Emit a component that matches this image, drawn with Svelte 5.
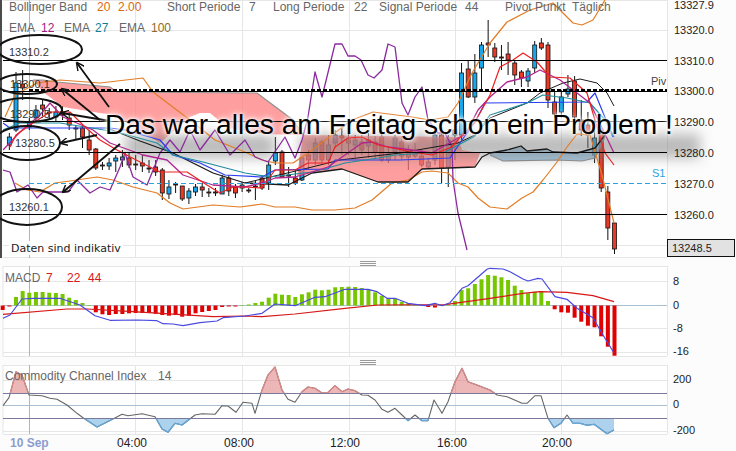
<script>
  // x of candle k; 15 minute bars
  const bx = (k) => 16 + 6.65 * k;
  const pts = (a) => a.map((p) => p.join(',')).join(' ');
  const area = (a, y) => `${a[0][0]},${y} ${pts(a)} ${a[a.length - 1][0]},${y}`;

  const vgrid = [135, 242, 349, 455, 561];

  // k, high, body top, body bottom, low, colour
  const candles = [
    [-1,133,137,145,150,'u'],[0,72,83,130,132,'u'],[1,70,84,88,100,'d'],[2,118,122,127,130,'u'],[3,105,110,118,122,'u'],
    [4,100,105,109,116,'d'],[5,108,112,113,118,'d'],[6,106,112,117,122,'u'],[7,106,112,115,120,'d'],[8,112,118,125,130,'d'],
    [9,125,128,129,140,'d'],[10,125,128,137,148,'d'],[11,130,140,150,155,'d'],[12,148,149,168,170,'d'],[13,162,165,166,170,'d'],
    [14,158,163,166,170,'u'],[15,155,158,161,172,'u'],[16,150,157,160,167,'u'],[17,152,158,165,168,'d'],[18,155,164,165,170,'d'],
    [19,155,163,166,172,'d'],[20,160,168,169,173,'d'],[21,160,167,172,176,'d'],[22,168,170,193,200,'d'],[23,180,187,194,199,'u'],
    [24,182,184,185,193,'d'],[25,186,186,199,201,'d'],[26,188,191,198,204,'u'],[27,184,187,192,196,'u'],[28,183,187,190,197,'d'],
    [29,188,192,193,197,'d'],[30,188,192,193,196,'d'],[31,175,178,194,194,'u'],[32,175,178,191,196,'d'],[33,184,187,193,198,'d'],
    [34,182,185,188,192,'u'],[35,188,190,191,193,'d'],[36,181,186,187,200,'d'],[37,175,178,188,190,'d'],[38,162,165,183,190,'u'],
    [39,137,153,161,165,'u'],[40,150,152,177,178,'d'],[41,167,175,176,187,'d'],[42,170,178,183,185,'d'],[43,157,158,180,181,'u'],
    [44,150,155,160,170,'d'],[45,138,143,160,165,'u'],[46,140,142,160,163,'d'],[47,135,145,160,165,'u'],[48,130,135,143,148,'u'],
    [49,128,136,138,155,'d'],[50,133,140,143,155,'d'],[51,135,140,145,158,'u'],[52,135,142,150,155,'d'],[53,133,140,146,158,'u'],
    [54,136,142,152,158,'d'],[55,130,137,160,162,'d'],[56,148,154,160,163,'u'],[57,135,138,152,160,'u'],[58,136,142,156,160,'d'],
    [59,145,150,157,170,'d'],[60,143,153,156,158,'d'],[61,150,156,165,167,'d'],[62,158,162,167,168,'u'],[63,130,135,160,165,'u'],
    [64,130,135,168,183,'d'],[65,135,140,167,187,'u'],[66,125,130,135,160,'u'],[67,63,73,135,140,'u'],[68,60,69,97,98,'d'],
    [69,54,73,97,103,'u'],[70,42,45,68,90,'u'],[71,20,43,45,57,'d'],[72,43,48,57,62,'d'],[73,45,57,58,70,'d'],
    [74,42,54,60,75,'d'],[75,60,63,75,85,'d'],[76,70,72,78,87,'d'],[77,68,71,81,87,'u'],[78,41,45,68,73,'u'],
    [79,38,43,48,50,'d'],[80,42,45,100,108,'d'],[81,91,102,114,118,'d'],[82,90,97,112,118,'u'],[83,75,89,94,97,'u'],
    [84,76,81,117,120,'d'],[85,100,120,130,136,'d'],[86,112,125,135,148,'d'],[87,118,138,155,163,'u'],[88,125,130,188,192,'d'],
    [89,186,192,228,240,'d'],[90,223,223,249,254,'d']
  ];

  const cloudRed = [[33,80],[43,80],[57,82],[110,87],[117,92],[257,93],[293,120],[303,135],[265,134],[228,128],[210,113],[200,113],[190,117],[160,143],[133,127],[115,115],[100,113],[63,107],[43,92]];
  const cloudTop = [[33,80],[43,80],[57,82],[110,87],[117,92],[257,93],[293,120],[303,135]];
  const cloudRed2 = [[297,176],[303,135],[458,137],[462,150],[480,153],[475,167],[422,169],[408,182],[378,182],[342,169],[312,173]];
  const blueTop = [[490,153],[507,150],[521,146],[527,151],[547,149],[553,152],[577,153],[595,148],[605,135]];
  const blueBot = [[605,137],[595,158],[582,161],[557,160],[503,161],[490,155]];

  const bollUp = [[5,117],[15,95],[37,83],[60,80],[100,83],[143,78],[153,92],[190,120],[215,140],[245,152],[262,160],[275,163],[293,163],[308,153],[332,135],[352,120],[373,112],[412,117],[430,120],[448,117],[458,103],[472,73],[490,43],[507,22],[530,10],[553,3],[573,23],[582,25],[593,20],[605,0]];
  const bollLow = [[15,183],[27,190],[40,192],[55,183],[70,181],[97,177],[113,180],[133,187],[157,193],[170,203],[183,209],[213,205],[240,207],[262,204],[275,207],[295,207],[312,210],[335,210],[355,208],[372,200],[392,183],[408,180],[422,172],[432,171],[448,173],[458,183],[468,187],[478,198],[490,207],[507,209],[522,198],[533,192],[543,180],[557,162],[567,147],[577,134],[590,135],[602,175],[614,223]];
  const chikou = [[3,170],[10,172],[17,192],[28,185],[37,198],[43,192],[63,192],[68,192],[77,180],[90,193],[100,187],[110,190],[120,167],[125,153],[133,177],[147,185],[160,153],[170,140],[180,152],[190,130],[200,150],[215,130],[230,155],[245,140],[255,157],[268,162],[285,137],[295,158],[302,140],[308,117],[315,72],[322,97],[335,44],[342,44],[348,56],[355,56],[361,60],[368,75],[374,78],[382,70],[388,44],[395,47],[402,103],[408,115],[415,97],[422,87],[428,120],[438,133],[445,133],[452,147],[453,180],[458,213],[467,250]];
  const redLine = [[10,147],[16,135],[30,125],[50,112],[70,112],[85,127],[100,140],[117,150],[140,162],[160,172],[187,172],[207,185],[220,193],[233,187],[245,187],[262,188],[275,170],[295,170],[308,163],[328,163],[335,147],[348,138],[362,137],[378,145],[412,152],[432,155],[452,147],[462,135],[475,122],[490,95],[500,67],[513,60],[523,53],[537,62],[550,77],[570,78],[587,93],[597,127],[605,153],[614,165]];
  const blueLine = [[3,123],[10,128],[110,128],[125,130],[160,140],[173,155],[200,163],[225,175],[262,177],[275,170],[328,169],[335,160],[400,160],[450,158],[462,140],[475,122],[485,103],[587,102],[595,93],[613,137]];
  const teal = [[3,130],[20,123],[60,123],[117,132],[157,143],[173,155],[203,162],[245,173],[270,177],[312,172],[328,168],[345,163],[378,158],[395,155],[445,152],[462,143],[475,136],[490,115],[527,103],[543,95],[567,98],[590,103],[605,120],[614,137]];
  const magenta = [[3,150],[20,132],[40,115],[50,103],[63,117],[93,130],[110,143],[143,155],[167,160],[183,175],[213,185],[245,187],[265,182],[275,178],[295,177],[312,172],[328,167],[335,162],[362,143],[372,142],[388,147],[412,150],[432,153],[458,138],[465,135],[478,110],[490,97],[507,82],[527,77],[540,70],[560,80],[577,93],[590,103],[603,130],[614,153]];
  const blackA = [[107,128],[140,141],[173,153],[213,173],[245,183],[288,185],[312,173],[342,169],[378,182],[408,182],[422,169],[475,167],[482,157],[490,153]];
  const blackB = [[245,183],[300,170],[340,160],[400,153],[458,143],[475,135],[490,118],[527,103],[540,93],[563,83],[580,79],[597,83],[607,93],[614,106]];

  const ellipses = [[40,49.5,42,14.5],[27,84,30,10],[27,110,35,12],[27,143,33,17],[27,207,35,18]];
  const arrows = [[109,107,77,63],[100,120,62,89],[110,121,62,113],[97,135,61,143],[120,144,63,192]];
  const notes = [['13310.2',9,56],['13300.1',10,88],['13290.5',10,118],['13280.5',15,147],['13260.1',9,211]];

  // histogram tops from k = -2
  const macd = [310,306.5,297,291,292.7,292,292,292.7,293,294,297.7,300,303,305,312.3,314.3,315,314,314,313.3,313,313,313,313.7,315,315.7,315,316.7,315.7,313.3,312,311,310,307,306.5,306.5,305,304.5,303,301.7,297.7,293.7,294.7,295,297,294.3,292.3,289.7,290.3,289.7,287.3,287,286.7,287,288,289.3,292.3,295.7,298.3,298.7,301.7,303,304.3,305,307,307.5,305,304.5,301,290,288.3,284,279.3,275,275.7,277.3,280,285.7,290,293.3,291.7,291.7,301,309.3,312.3,312.7,317.7,321.7,325.7,327.3,336.3,346.7,355.7];
  const macdBlue = [[3,318.3],[10,315],[22,299],[33,298.3],[60,298.3],[80,305],[95,315.7],[110,320.3],[137,320],[157,320.7],[163,323.7],[173,324],[183,325.7],[200,322.7],[217,321],[223,317.7],[245,316],[262,313.3],[275,304],[295,305.7],[315,297.3],[325,296.7],[345,289.3],[368,289.3],[377,291.7],[387,298.3],[395,298.3],[408,303.3],[425,305.7],[435,303.3],[442,305.7],[450,302.7],[462,288.3],[468,285.7],[487,269.3],[490,268.3],[503,269],[510,271.7],[523,279],[528,281],[538,278.3],[542,279],[555,296.7],[567,299.3],[577,308.3],[593,317.7],[603,335],[614,353]];
  const macdRed = [[3,314.3],[67,309],[87,309],[133,311.7],[213,316.7],[245,316],[262,316.7],[295,314],[345,308.3],[378,305],[445,304.7],[490,298.3],[523,293.3],[540,291.7],[567,292.3],[593,295.7],[614,301.7]];

  const cci = [[3,405.7],[9,397.7],[16,371.7],[22,375],[29,395],[42,395.7],[50,398.3],[57,399.3],[67,405],[77,413.3],[83,417.7],[97,427],[113,419],[122,414.3],[128,415.7],[142,413.7],[155,416.7],[162,429],[168,432.3],[175,423.3],[182,425],[195,415],[202,413.7],[215,414.3],[222,405.7],[228,406],[236,412.3],[243,402.3],[252,403.3],[255,413.3],[262,390],[268,375],[275,367],[282,390],[288,399.3],[295,402.3],[302,391.7],[308,387],[315,388.3],[322,393],[328,392.3],[335,385.7],[342,391.7],[348,389],[355,390.7],[362,395],[368,395.3],[375,400],[382,409.3],[388,412.3],[395,408.3],[402,415],[408,420.7],[415,415],[422,420.7],[428,420.7],[434,400],[442,413.3],[448,401.7],[455,381.7],[462,368.3],[468,381.7],[475,384.3],[490,390],[497,395],[507,396.7],[522,403.3],[527,403.3],[535,395.7],[541,395.7],[548,418.3],[554,427.7],[561,423.3],[567,415],[573,423.3],[580,423.3],[587,425.3],[594,424.3],[607,433.7],[614,430]];

  const times = [['04:00',132],['08:00',239],['12:00',345],['16:00',452],['20:00',557]];
</script>

<div class="chart">
  <svg class="main" viewBox="0 0 736 258" width="736" height="258">
    <defs>
      <clipPath id="plot"><rect x="3" y="0" width="664" height="258" /></clipPath>
      <filter id="soft" x="-10%" y="-100%" width="120%" height="300%">
        <feGaussianBlur stdDeviation="6.5" />
      </filter>
    </defs>
    <rect x="3" y="0" width="664" height="257" fill="#fff" />
    <g class="grid">
      {#each [30.5, 245.5, 257.5] as y}<line x1="3" x2="667" y1={y} y2={y} />{/each}
      <line x1="3" x2="667" y1="0.5" y2="0.5" />
      {#each vgrid as x}<line x1={x + 0.5} x2={x + 0.5} y1="0" y2="257" />{/each}
      <line x1="667.5" x2="667.5" y1="0" y2="257" />
    </g>
    <line class="cross" x1="29.5" x2="29.5" y1="0" y2="258" />

    <g clip-path="url(#plot)">
      {#each candles as [k, hi, top, bot, lo, c]}
        <line class="wick" x1={bx(k)} x2={bx(k)} y1={hi} y2={lo} />
        <rect class={c === 'u' ? 'up' : 'down'} x={bx(k) - 2} y={top} width="4" height={bot - top} />
      {/each}

      <polygon class="cloud" points={pts(cloudRed)} />
      <polygon class="cloud" points={pts(cloudRed2)} />
      <polygon class="cloud-blue" points={pts([...blueTop, ...blueBot])} />
      <polyline class="edge" points={pts(cloudTop)} />
      <polyline class="edge" points={pts(blueBot)} />
    </g>

    <!-- the shadow of the headline sits under the indicator lines -->
    <g class="shade" filter="url(#soft)">
      <rect x="125" y="134" width="150" height="24" />
      <rect x="300" y="134" width="400" height="24" />
    </g>

    <g clip-path="url(#plot)">
      <polyline class="l orange" points={pts(bollUp)} />
      <polyline class="l orange" points={pts(bollLow)} />
      <polyline class="l purple" points={pts(chikou)} />
      <polyline class="l black" points={pts(blackA)} />
      <polyline class="l black thin" points={pts(blackB)} />
      <polyline class="l black" points={pts(blueTop)} />
      <polyline class="l blue" points={pts(blueLine)} />
      <polyline class="l teal" points={pts(teal)} />
      <polyline class="l magenta" points={pts(magenta)} />
      <polyline class="l red" points={pts(redLine)} />
    </g>

    <g class="level">
      {#each [60.5, 91.5, 121.5, 152.5, 214.5] as y}<line x1="3" x2="667" y1={y} y2={y} />{/each}
      <line class="piv" x1="29" x2="667" y1="90" y2="90" />
    </g>
    <line class="s1" x1="29" x2="667" y1="183.5" y2="183.5" />
    <line class="edge-left" x1="1" x2="1" y1="0" y2="258" />

    <text class="lbl" x="651" y="85" fill="#444">Piv</text>
    <text class="lbl" x="652" y="177" fill="#29a3dc">S1</text>

    <g class="legend">
      <text x="9" y="11">Bollinger Band</text>
      <text class="orange-t" x="97" y="11">20</text>
      <text class="orange-t" x="118" y="11">2.00</text>
      <text x="167" y="11">Short Periode</text>
      <text x="249" y="11">7</text>
      <text x="273" y="11">Long Periode</text>
      <text x="354" y="11">22</text>
      <text x="379" y="11">Signal Periode</text>
      <text x="465" y="11">44</text>
      <text x="505" y="11">Pivot Punkt</text>
      <text x="572" y="11">Täglich</text>
      <text x="9" y="32">EMA</text>
      <text class="magenta-t" x="41" y="32">12</text>
      <text x="64" y="32">EMA</text>
      <text class="teal-t" x="95" y="32">27</text>
      <text x="119" y="32">EMA</text>
      <text class="brown-t" x="151" y="32">100</text>
    </g>

    <g class="axis">
      <text x="674" y="9">13327.9</text>
      <text x="674" y="34">13320.0</text>
      <text x="674" y="65">13310.0</text>
      <text x="674" y="95">13300.0</text>
      <text x="674" y="126">13290.0</text>
      <text x="674" y="157">13280.0</text>
      <text x="674" y="188">13270.0</text>
      <text x="674" y="219">13260.0</text>
    </g>
    <rect class="price" x="667.5" y="239.5" width="67" height="17" />
    <text class="axis" x="672" y="252">13248.5</text>

    <rect class="note-bg" x="9" y="241" width="114" height="14" />
    <text class="note" x="11" y="252">Daten sind indikativ</text>
  </svg>

  <div class="grip"><i></i><i></i><i></i></div>

  <svg viewBox="0 266 736 91" width="736" height="91">
    <rect x="3" y="266" width="664" height="91" fill="#fff" />
    <g class="grid">
      {#each [266.5, 281.5, 328.5, 352.5, 356.5] as y}<line x1="3" x2="667" y1={y} y2={y} />{/each}
      {#each vgrid as x}<line x1={x + 0.5} x2={x + 0.5} y1="266" y2="356" />{/each}
      <line x1="3" x2="3" y1="266" y2="356" />
      <line x1="667.5" x2="667.5" y1="266" y2="356" />
    </g>
    <line class="zero" x1="3" x2="667" y1="305.5" y2="305.5" />
    <line class="cross" x1="29.5" x2="29.5" y1="266" y2="356" />
    {#each macd as top, i}
      <rect
        class={top > 305.5 ? 'bar-neg' : 'bar-pos'}
        x={bx(i - 2) - 2}
        y={Math.min(top, 305.5)}
        width="4"
        height={Math.abs(top - 305.5)}
      />
    {/each}
    <polyline class="l macd-red" points={pts(macdRed)} />
    <polyline class="l macd-blue" points={pts(macdBlue)} />
    <g class="legend">
      <text x="5" y="282">MACD</text>
      <text class="red-t" x="46" y="282">7</text>
      <text class="red-t" x="67" y="282">22</text>
      <text class="red-t" x="88" y="282">44</text>
    </g>
    <g class="axis">
      <text x="673" y="285">8</text>
      <text x="673" y="309">0</text>
      <text x="673" y="332">-8</text>
      <text x="673" y="355">-16</text>
    </g>
  </svg>

  <div class="grip"><i></i><i></i><i></i></div>

  <svg viewBox="0 365 736 71" width="736" height="71">
    <defs>
      <clipPath id="over"><rect x="3" y="365" width="664" height="28" /></clipPath>
      <clipPath id="under"><rect x="3" y="418" width="664" height="18" /></clipPath>
    </defs>
    <rect x="3" y="365" width="664" height="69" fill="#fff" />
    <g class="grid">
      {#each [365.5, 380.5, 431.5, 434.5] as y}<line x1="3" x2="667" y1={y} y2={y} />{/each}
      {#each vgrid as x}<line x1={x + 0.5} x2={x + 0.5} y1="365" y2="434" />{/each}
      <line x1="3" x2="3" y1="365" y2="434" />
      <line x1="667.5" x2="667.5" y1="365" y2="434" />
    </g>
    <line class="zero" x1="3" x2="667" y1="405.5" y2="405.5" />
    <line class="cross" x1="29.5" x2="29.5" y1="365" y2="434" />
    <polygon class="cci-up" clip-path="url(#over)" points={area(cci, 393)} />
    <polygon class="cci-down" clip-path="url(#under)" points={area(cci, 418)} />
    <polyline class="l cci" points={pts(cci)} />
    <polyline class="l cci-up-line" clip-path="url(#over)" points={pts(cci)} />
    <polyline class="l cci-down-line" clip-path="url(#under)" points={pts(cci)} />
    <line class="band" x1="3" x2="667" y1="393.5" y2="393.5" />
    <line class="band" x1="3" x2="667" y1="418.5" y2="418.5" />
    <g class="legend">
      <text x="5" y="380">Commodity Channel Index</text>
      <text x="158" y="380">14</text>
    </g>
    <g class="axis">
      <text x="673" y="383">200</text>
      <text x="673" y="408">0</text>
      <text x="673" y="434">-200</text>
    </g>
  </svg>

  <div class="times">
    <span class="date">10 Sep</span>
    {#each times as [t, x]}
      <span class="time" style="left: {x}px">{t}</span>
    {/each}
  </div>

  <!-- drawing laid over the chart by hand -->
  <svg class="marks" viewBox="0 0 736 258" width="736" height="258">
    <defs>
      <marker id="head" markerWidth="9" markerHeight="8" refX="7" refY="4" orient="auto-start-reverse" markerUnits="userSpaceOnUse">
        <path d="M8 4 L0 0 M8 4 L0 8 M8 4 L1 4" fill="none" stroke="#111" stroke-width="1.4" />
      </marker>
    </defs>
    {#each ellipses as [cx, cy, rx, ry]}
      <ellipse {cx} {cy} {rx} {ry} />
    {/each}
    {#each arrows as [x1, y1, x2, y2]}
      <line {x1} {y1} {x2} {y2} marker-end="url(#head)" />
    {/each}
    {#each notes as [t, x, y]}
      <text {x} {y}>{t}</text>
    {/each}
  </svg>

  <div class="headline">Das war alles am Freitag schon ein Problem !</div>
</div>

<style>
  :global(body) {
    margin: 0;
    background: #fcfcfc;
  }

  .chart {
    position: relative;
    display: flex;
    flex-direction: column;
    width: 736px;
    height: 451px;
    overflow: hidden;
    font-family: "Liberation Sans", Arial, sans-serif;
  }

  svg {
    display: block;
    flex: none;
    font-family: "Liberation Sans", Arial, sans-serif;
  }

  .grid line { stroke: #e6e6e6; stroke-width: 1; }
  .cross { stroke: #abb0e0; stroke-width: 1; }
  .zero { stroke: #a9c0d4; stroke-width: 1; }
  .band { stroke: #7c7a9c; stroke-width: 1; }
  .wick { stroke: #111; stroke-width: 1; }
  .up { fill: #1aa6ea; stroke: #111; stroke-width: 0.8; }
  .down { fill: #ea3a26; stroke: #111; stroke-width: 0.8; }

  .cloud { fill: rgba(255, 120, 120, 0.72); }
  .cloud-blue { fill: rgba(120, 170, 205, 0.65); }
  .edge { fill: none; stroke: #8f8f8f; stroke-width: 1.2; }
  .shade rect { fill: rgba(120, 120, 120, 0.5); }

  .l { fill: none; stroke-linejoin: round; }
  .orange { stroke: #e27d26; stroke-width: 1.2; }
  .purple { stroke: #8b2a9e; stroke-width: 1.3; }
  .black { stroke: #1a1a1a; stroke-width: 1.3; }
  .thin { stroke-width: 1; }
  .blue { stroke: #2a3cf0; stroke-width: 1.2; }
  .teal { stroke: #1f8c9c; stroke-width: 1.2; }
  .magenta { stroke: #b0258f; stroke-width: 1.3; }
  .red { stroke: #ee2020; stroke-width: 1.2; }

  .level line { stroke: #000; stroke-width: 1.2; }
  .level .piv { stroke-width: 2; stroke-dasharray: 4 2; }
  .s1 { stroke: #29a3dc; stroke-width: 1.2; stroke-dasharray: 5 3; }
  .edge-left { stroke: #111; stroke-width: 1.5; }

  text { font-size: 12px; }
  .lbl { font-size: 11px; }
  .legend text { font-size: 12px; fill: #666; }
  .legend .orange-t { fill: #d96a0c; }
  .legend .magenta-t { fill: #a01a80; }
  .legend .teal-t { fill: #0f7f96; }
  .legend .brown-t { fill: #8f6a2c; }
  .legend .red-t { fill: #d81818; }
  .axis, .axis text { font-size: 11px; fill: #222; }
  .price { fill: #e2e2e2; stroke: #111; stroke-width: 1; }
  .note-bg { fill: #fff; }
  .note { font-family: "DejaVu Sans", sans-serif; font-size: 11px; fill: #222; }

  .bar-pos { fill: #77c700; }
  .bar-neg { fill: #e00000; }
  .macd-blue { stroke: #4a4ae0; stroke-width: 1.2; }
  .macd-red { stroke: #d81818; stroke-width: 1.2; }

  .cci { stroke: #666; stroke-width: 1.1; }
  .cci-up { fill: rgba(215, 95, 95, 0.45); }
  .cci-down { fill: rgba(90, 165, 220, 0.5); }
  .cci-up-line { stroke: #dd8a8a; stroke-width: 1.2; }
  .cci-down-line { stroke: #62a9dc; stroke-width: 1.2; }

  .grip {
    flex: none;
    height: 8px;
    display: flex;
    flex-direction: column;
    align-items: center;
    justify-content: flex-end;
    gap: 1px;
  }

  .grip i {
    display: block;
    width: 16px;
    height: 1px;
    background: #9a9a9a;
  }

  .times {
    position: relative;
    flex: none;
    height: 15px;
    font-size: 12px;
    line-height: 14px;
    color: #222;
  }

  .date {
    position: absolute;
    left: 10px;
    font-weight: bold;
    color: #8c9ccf;
  }

  .time {
    position: absolute;
    transform: translateX(-50%);
  }

  .marks {
    position: absolute;
    left: 0;
    top: 0;
    overflow: hidden;
  }

  .marks ellipse { fill: none; stroke: #111; stroke-width: 2; }
  .marks line { stroke: #111; stroke-width: 1.8; }
  .marks text { font-size: 11px; fill: #333; }

  .headline {
    position: absolute;
    left: 105px;
    top: 108px;
    font-size: 28.15px;
    line-height: 34px;
    color: #000;
    white-space: nowrap;
    text-shadow: 0 0 3px #fff, 0 0 5px #fff, 0 0 8px #fff;
  }
</style>
